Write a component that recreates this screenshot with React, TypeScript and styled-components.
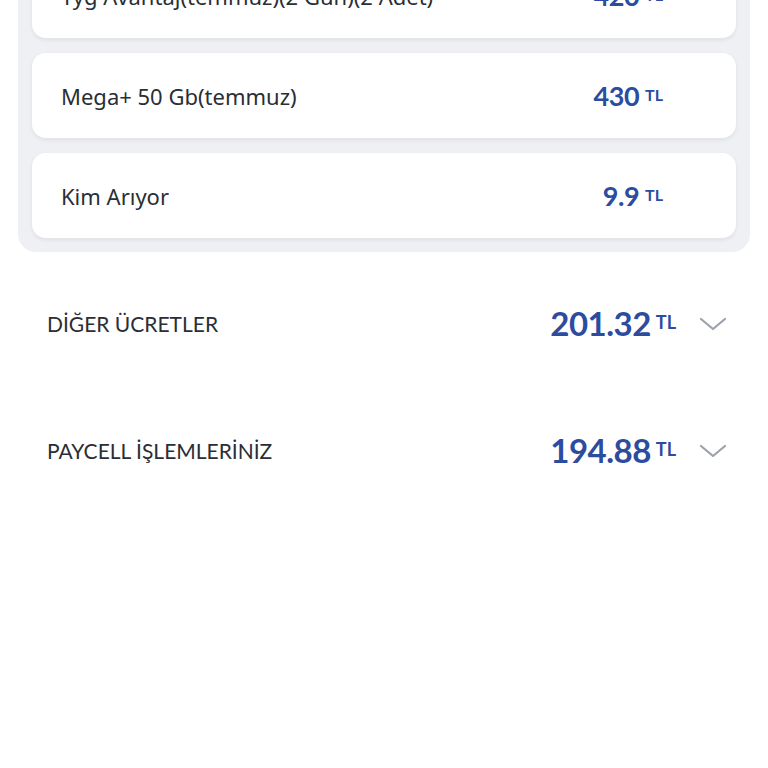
import React from 'react';
import styled, { createGlobalStyle } from 'styled-components';

const GlobalStyle = createGlobalStyle`
	html, body {
		margin: 0;
		padding: 0;
		background: #ffffff;
	}
	body {
		font-family: Lato, 'Noto Sans', sans-serif;
		color: #2a2e35;
	}
`;

const Page = styled.div`
	width: 768px;
	height: 768px;
	overflow: hidden;
	box-sizing: border-box;
	padding: 0 18px;
`;

// scrolled view: first card is partly above the viewport
const Scroller = styled.div`
	margin-top: -61px;
`;

const Panel = styled.div`
	background: #eef0f3;
	border-radius: 18px;
	padding: 14px;
	display: flex;
	flex-direction: column;
	gap: 15px;
`;

const Card = styled.div`
	height: 85px;
	background: #ffffff;
	border-radius: 14px;
	box-shadow: 0 2px 4px rgba(40, 50, 70, 0.08);
	display: flex;
	align-items: center;
	justify-content: space-between;
	padding: 0 73px 0 29px;
`;

const Label = styled.span`
	font-family: 'Noto Sans', Lato, sans-serif;
	font-size: 22px;
	font-weight: 400;
	color: #2a2e35;
`;

const Price = styled.div<{ $big?: boolean }>`
	display: flex;
	align-items: flex-start;
	gap: ${(p) => (p.$big ? '5px' : '6px')};
	color: #2c4c9f;
	font-weight: 700;
	line-height: 1;
`;

const Amount = styled.span<{ $big?: boolean }>`
	font-size: ${(p) => (p.$big ? '33px' : '27px')};
	letter-spacing: -0.5px;
`;

const Currency = styled.span<{ $big?: boolean }>`
	font-size: ${(p) => (p.$big ? '18px' : '16px')};
	margin-top: ${(p) => (p.$big ? '6px' : '5px')};
`;

const Sections = styled.div`
	margin-top: 8px;
	display: flex;
	flex-direction: column;
`;

const SectionRow = styled.div`
	height: 127px;
	display: flex;
	align-items: center;
	padding: 0 23px 0 29px;
`;

const SectionTitle = styled.span`
	flex: 1;
	font-size: 21px;
	color: #2a2e35;
`;

const Chevron = styled.svg`
	width: 28px;
	height: 16px;
	margin-left: 23px;
`;

const items = [
	{ label: 'Tyg Avantaj(temmuz)(2 Gün)(2 Adet)', amount: '420' },
	{ label: 'Mega+ 50 Gb(temmuz)', amount: '430' },
	{ label: 'Kim Arıyor', amount: '9.9' },
];

const sections = [
	{ title: 'DİĞER ÜCRETLER', amount: '201.32' },
	{ title: 'PAYCELL İŞLEMLERİNİZ', amount: '194.88' },
];

const ChevronDown = () => (
	<Chevron viewBox="0 0 28 16">
		<path d="M2 3 L14 13 L26 3" fill="none" stroke="#9ca1ad" strokeWidth="2.2" strokeLinecap="round" strokeLinejoin="round" />
	</Chevron>
);

const App = () => {
	return (
		<Page>
			<GlobalStyle />
			<Scroller>
				<Panel>
					{items.map((it) => (
						<Card key={it.label}>
							<Label>{it.label}</Label>
							<Price>
								<Amount>{it.amount}</Amount>
								<Currency>TL</Currency>
							</Price>
						</Card>
					))}
				</Panel>
				<Sections>
					{sections.map((s) => (
						<SectionRow key={s.title}>
							<SectionTitle>{s.title}</SectionTitle>
							<Price $big>
								<Amount $big>{s.amount}</Amount>
								<Currency $big>TL</Currency>
							</Price>
							<ChevronDown />
						</SectionRow>
					))}
				</Sections>
			</Scroller>
		</Page>
	);
};

export default App;
